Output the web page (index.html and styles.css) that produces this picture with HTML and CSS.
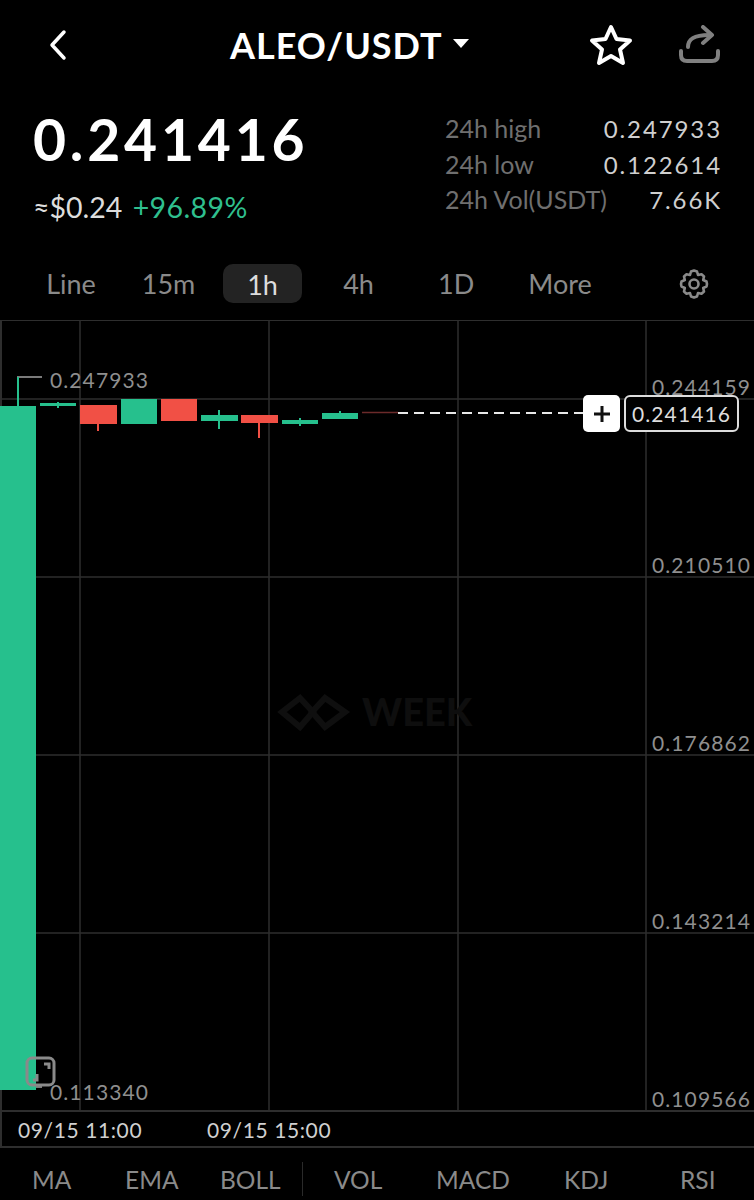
FILE: index.html
```html
<!DOCTYPE html>
<html lang="en">
<head>
    <meta charset="UTF-8">
    <meta name="viewport" content="width=device-width, initial-scale=1.0">
    <title>ALEO/USDT</title>
    <link rel="stylesheet" href="styles.css">
</head>
<body>
    <div class="header">
        <svg class="back-icon" width="20" height="32" viewBox="0 0 20 32"><path d="M16 3 L4 16 L16 29"/></svg>
        <div class="pair">ALEO/USDT<span class="caret"></span></div>
        <svg class="star-icon" width="44" height="42" viewBox="0 0 44 42"><path d="M22 3 L27.5 15 L41 16.5 L31 25.5 L34 39 L22 32 L10 39 L13 25.5 L3 16.5 L16.5 15 Z"/></svg>
        <svg class="share-icon" width="42" height="40" viewBox="0 0 42 40"><path d="M9 22 C9 14 15 10 30 10"/><path d="M24 2 L33 10 L24 18"/><path d="M2 26 V30 C2 34 4 36 8 36 H33 C37 36 39 34 39 30 V26"/></svg>
    </div>

    <div class="ticker">
        <div class="price-box">
            <div class="price">0.241416</div>
            <div class="price-sub">≈$0.24 <span class="change">+96.89%</span></div>
        </div>
        <div class="stats">
            <div class="stat"><span>24h high</span><b>0.247933</b></div>
            <div class="stat"><span>24h low</span><b>0.122614</b></div>
            <div class="stat"><span>24h Vol(USDT)</span><b>7.66K</b></div>
        </div>
    </div>

    <div class="tabs">
        <span class="tab tab-line">Line</span>
        <span class="tab tab-15m">15m</span>
        <span class="tab tab-1h active">1h</span>
        <span class="tab tab-4h">4h</span>
        <span class="tab tab-1d">1D</span>
        <span class="tab tab-more">More</span>
        <svg class="gear-icon" width="32" height="32" viewBox="0 0 32 32"><path d="M16 2.5 L19 3.5 L20 7 L23.5 6.3 L26 8.5 L25.2 12 L28.5 13.5 L29 16 L28.5 18.5 L25.2 20 L26 23.5 L23.5 25.7 L20 25 L19 28.5 L16 29.5 L13 28.5 L12 25 L8.5 25.7 L6 23.5 L6.8 20 L3.5 18.5 L3 16 L3.5 13.5 L6.8 12 L6 8.5 L8.5 6.3 L12 7 L13 3.5 Z"/><circle cx="16" cy="16" r="4.5"/></svg>
    </div>

    <div class="chart">
        <svg class="plot" width="754" height="790" viewBox="0 320 754 790">
            <g class="grid">
                <path d="M0 399 H754 M0 577 H754 M0 755 H754 M0 933 H754"/>
                <path d="M80 320 V1110 M269 320 V1110 M458 320 V1110 M646 320 V1110"/>
            </g>

            <!-- watermark -->
            <g class="watermark-logo">
                <path d="M300 698 L282 712 L300 727 L313 712 Z"/>
                <path d="M325 698 L345 712 L325 727 L312 712 Z"/>
            </g>
            <text class="watermark-text" x="362" y="726">WEEK</text>

            <path class="hi-lo" d="M18 406 V377 H42 M18 1087 H42"/>

            <g class="up">
                <path class="wick" d="M18 377 V406 M58 402 V408 M219 410 V429 M300 418 V426 M340 411 V415"/>
                <rect x="0" y="406" width="36" height="684"/>
                <rect x="40" y="403" width="36" height="3"/>
                <rect x="121" y="399" width="36" height="25"/>
                <rect x="201" y="415" width="37" height="6"/>
                <rect x="282" y="420" width="36" height="4"/>
                <rect x="322" y="413" width="36" height="6"/>
            </g>
            <g class="down">
                <path class="wick" d="M98 420 V431 M259 420 V438"/>
                <rect x="80" y="405" width="37" height="19"/>
                <rect x="161" y="399" width="36" height="22"/>
                <rect x="241" y="415" width="37" height="8"/>
            </g>
            <path class="flat" d="M362 412.5 H398"/>
            <path class="last-line" d="M398 413 H583"/>

            <text class="axis-label" x="50" y="388">0.247933</text>
            <text class="axis-label" x="50" y="1100">0.113340</text>
            <text class="axis-label" x="652" y="395">0.244159</text>
            <text class="axis-label" x="652" y="573">0.210510</text>
            <text class="axis-label" x="652" y="751">0.176862</text>
            <text class="axis-label" x="652" y="929">0.143214</text>
            <text class="axis-label" x="652" y="1107">0.109566</text>
        </svg>

        <div class="plus-btn">
            <svg width="20" height="20" viewBox="0 0 20 20"><path d="M10 2 V18 M2 10 H18"/></svg>
        </div>
        <div class="price-tag">0.241416</div>

        <svg class="expand-icon" width="32" height="32" viewBox="0 0 32 32">
            <rect x="2" y="2" width="27" height="27" rx="5"/>
            <path d="M19 8 H24 V13 M12 18 V24 H8"/>
        </svg>

        <div class="time-axis">
            <span class="time-first">09/15 11:00</span>
            <span class="time-second">09/15 15:00</span>
        </div>
    </div>

    <div class="indicators">
        <span class="ind-ma">MA</span>
        <span class="ind-ema">EMA</span>
        <span class="ind-boll">BOLL</span>
        <i class="ind-sep"></i>
        <span class="ind-vol">VOL</span>
        <span class="ind-macd">MACD</span>
        <span class="ind-kdj">KDJ</span>
        <span class="ind-rsi">RSI</span>
    </div>
</body>
</html>
```

FILE: styles.css
```css
* {
    margin: 0;
    padding: 0;
    box-sizing: border-box;
    font-family: 'Lato', 'Liberation Sans', sans-serif;
}

body {
    background: #000;
    width: 754px;
    height: 1200px;
    overflow: hidden;
    color: #fff;
}

svg {
    display: block;
    fill: none;
}

.header {
    display: flex;
    align-items: center;
    height: 90px;
    padding-left: 48px;
}

.back-icon {
    stroke: #fff;
    stroke-width: 3.5;
    stroke-linecap: round;
    stroke-linejoin: round;
}

.pair {
    display: flex;
    align-items: center;
    margin-left: 162px;
    width: 359px;
    font-size: 36px;
    font-weight: 700;
    letter-spacing: 1px;
}

.caret {
    width: 0;
    height: 0;
    margin: 0 0 4px 10px;
    border-left: 8px solid transparent;
    border-right: 8px solid transparent;
    border-top: 9px solid #fff;
}

.star-icon {
    stroke: #fff;
    stroke-width: 4;
    stroke-linejoin: round;
}

.share-icon {
    margin-left: 46px;
    stroke: #808080;
    stroke-width: 4;
    stroke-linecap: round;
    stroke-linejoin: round;
}

.ticker {
    display: flex;
    justify-content: space-between;
    height: 157px;
    padding: 18px 32px 0 33px;
}

.price {
    font-size: 57px;
    font-weight: 700;
    line-height: 62px;
    letter-spacing: 3.8px;
}

.price-sub {
    margin-top: 21px;
    font-size: 28.5px;
    line-height: 32px;
    color: #ddd;
}

.change {
    margin-left: 3px;
    letter-spacing: 0.4px;
    color: #2fbf8e;
}

.stats {
    width: 277px;
    padding-top: 3px;
}

.stat {
    display: flex;
    justify-content: space-between;
    height: 35.5px;
    font-size: 25px;
    line-height: 35px;
    color: #6f6f6f;
}

.stat b {
    font-weight: 400;
    color: #cfcfcf;
    font-size: 24px;
    letter-spacing: 1.9px;
}

.tabs {
    display: flex;
    align-items: center;
    height: 73px;
    font-size: 27px;
    color: #8a8a8a;
}

.tab {
    text-align: center;
}

.tab-line { margin-left: 46px; width: 50px; }
.tab-15m { margin-left: 45px; width: 55px; }
.tab-1h { margin-left: 27px; width: 79px; }
.tab-4h { margin-left: 41px; width: 31px; }
.tab-1d { margin-left: 64px; width: 32px; }
.tab-more { margin-left: 58px; width: 64px; }

.tab.active {
    height: 39px;
    line-height: 41px;
    border-radius: 10px;
    background: #232323;
    color: #ddd;
}

.gear-icon {
    margin-left: 86px;
    stroke: #8a8a8a;
    stroke-width: 2.6;
    stroke-linejoin: round;
}

.chart {
    position: relative;
    height: 828px;
    border-top: 1px solid #2e2e2e;
    border-bottom: 2px solid #2e2e2e;
    border-left: 2px solid #2e2e2e;
}

.plot {
    margin: -1px 0 0 -2px;
}

.grid path {
    stroke: #2e2e2e;
    stroke-width: 1.5;
}

.watermark-logo path {
    stroke: #0f0f0f;
    stroke-width: 6;
}

.watermark-text {
    fill: #0e0e0e;
    font-size: 38px;
    font-weight: 900;
}

.hi-lo {
    stroke: #7a7a7a;
    stroke-width: 2;
}

.up rect { fill: #26c08d; }
.up .wick { stroke: #26c08d; stroke-width: 2; }
.down rect { fill: #f15045; }
.down .wick { stroke: #f15045; stroke-width: 2; }

.flat {
    stroke: #6b2a2a;
    stroke-width: 1.5;
}

.last-line {
    stroke: #e8e8e8;
    stroke-width: 2;
    stroke-dasharray: 10 6;
}

.axis-label {
    fill: #8f8f8f;
    font-size: 21px;
    letter-spacing: 1.1px;
}

.plus-btn {
    position: absolute;
    top: 74px;
    left: 581px;
    display: flex;
    align-items: center;
    justify-content: center;
    width: 37px;
    height: 37px;
    border-radius: 5px;
    background: #fff;
}

.plus-btn path {
    stroke: #111;
    stroke-width: 3;
}

.price-tag {
    position: absolute;
    top: 74px;
    left: 622px;
    width: 115px;
    height: 37px;
    border: 2px solid #ddd;
    border-radius: 6px;
    background: #000;
    font-size: 21px;
    line-height: 34px;
    letter-spacing: 1.1px;
    text-align: center;
    color: #ddd;
}

.expand-icon {
    position: absolute;
    top: 735px;
    left: 23px;
    stroke: #8a8a8a;
    stroke-width: 3;
}

.time-axis {
    display: flex;
    height: 36px;
    border-top: 2px solid #2e2e2e;
    font-size: 21px;
    line-height: 36px;
    letter-spacing: 0.6px;
    color: #d0d0d0;
}

.time-first { margin-left: 16px; width: 189px; }

.indicators {
    display: flex;
    align-items: center;
    height: 52px;
    padding-top: 10px;
    font-size: 24.5px;
    color: #8a8a8a;
}

.ind-ma { margin-left: 32px; width: 93px; }
.ind-ema { width: 95px; }
.ind-boll { width: 82px; }
.ind-sep { width: 1px; height: 34px; background: #2a2a2a; }
.ind-vol { margin-left: 31px; width: 102px; }
.ind-macd { width: 128px; }
.ind-kdj { width: 116px; }
```
